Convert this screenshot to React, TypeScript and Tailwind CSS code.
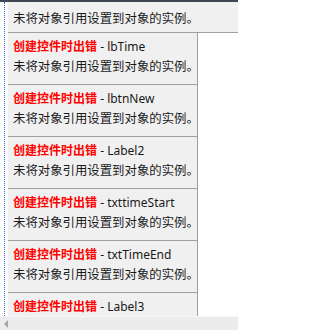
const ITEMS = ['lbTime', 'lbtnNew', 'Label2', 'txttimeStart', 'txtTimeEnd', 'Label3']

const MESSAGE = '未将对象引用设置到对象的实例。'

function ErrorBlock({ name }: { name: string }) {
  return (
    <div className="h-[52px] w-[190px] shrink-0 border-b border-r border-[#a0a0a0] bg-[#f0f0f0] pl-[5px] pt-[4px]">
      <div className="whitespace-nowrap text-[12px] leading-[20px]">
        <span className="font-bold text-[#ff0000]">创建控件时出错</span>
        <span className="text-[#1a1a1a]"> - {name}</span>
      </div>
      <div className="whitespace-nowrap text-[12.4px] leading-[20px] text-[#1a1a1a]">{MESSAGE}</div>
    </div>
  )
}

export default function App() {
  return (
    <div
      className="relative flex h-[330px] w-[238px] flex-col overflow-hidden bg-white"
      style={{ fontFamily: '"Noto Sans", "Noto Sans CJK SC", sans-serif' }}
    >
      <div className="h-[2px] shrink-0 bg-[#404654]" />

      <div className="flex min-h-0 flex-1">
        {/* designer margin with dotted guide */}
        <div className="w-[8px] shrink-0 pl-[4px]">
          <div className="h-full border-l border-dotted border-[#2f6fd6]" />
        </div>

        <div className="flex min-w-0 flex-1 flex-col">
          <div className="h-[31px] shrink-0 border-b border-[#a0a0a0] bg-[#f0f0f0] pl-[5px] pt-[7px]">
            <div className="whitespace-nowrap text-[12.4px] leading-[20px] text-[#1a1a1a]">{MESSAGE}</div>
          </div>
          {ITEMS.map((name) => (
            <ErrorBlock key={name} name={name} />
          ))}
        </div>
      </div>

      {/* horizontal scrollbar */}
      <div className="absolute bottom-0 left-0 flex h-[14px] w-full items-center border-t border-[#f7f7f7] bg-[#ececec] pl-[3px]">
        <svg width="6" height="8" viewBox="0 0 6 8">
          <path d="M5 0 L1 4 L5 8 Z" fill="#a6a6a6" />
        </svg>
      </div>
    </div>
  )
}
